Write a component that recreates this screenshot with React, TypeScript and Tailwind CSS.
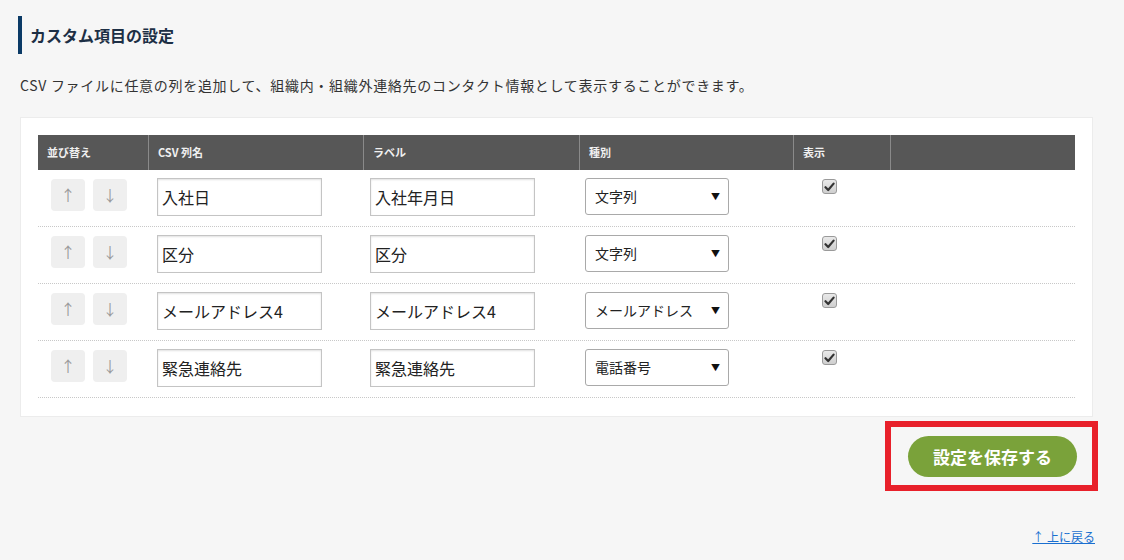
import React from "react";

const rows = [
  { csv: "入社日", label: "入社年月日", type: "文字列" },
  { csv: "区分", label: "区分", type: "文字列" },
  { csv: "メールアドレス4", label: "メールアドレス4", type: "メールアドレス" },
  { csv: "緊急連絡先", label: "緊急連絡先", type: "電話番号" },
];

const font = { fontFamily: '"Noto Sans CJK JP", "Noto Sans", sans-serif' };

function Check() {
  return (
    <span className="flex h-[15px] w-[15px] items-center justify-center rounded-[3px] border border-[#9a9a9a] bg-gradient-to-b from-[#e9e9e9] to-[#cfcfcf]">
      <svg width="11" height="10" viewBox="0 0 11 10">
        <path d="M1.5 5.2 L4.2 8 L9.6 1.6" fill="none" stroke="#333" strokeWidth="2.2" strokeLinecap="round" strokeLinejoin="round" />
      </svg>
    </span>
  );
}

export default function App() {
  return (
    <div className="min-h-[560px] w-[1124px] bg-[#f6f6f6] pt-[16px] text-[#333]" style={font}>
      <div className="ml-[18px] flex h-[38px] items-center border-l-4 border-[#0b3a66] pl-[8px]">
        <h2 className="text-[16px] font-bold text-[#1d2f45]">カスタム項目の設定</h2>
      </div>
      <p className="ml-[20px] mt-[21px] text-[14px] leading-[20px] tracking-[0.7px] text-[#333]">
        CSV ファイルに任意の列を追加して、組織内・組織外連絡先のコンタクト情報として表示することができます。
      </p>
      <div className="ml-[20px] mt-[22px] w-[1073px] border border-[#ececec] bg-white px-[17px] pb-[18px] pt-[17px]">
        <div className="w-[1037px]">
          <div className="flex h-[35px] bg-[#575757] text-[11px] font-bold text-[#f0f0f0]">
            <div className="flex w-[111px] items-center border-r border-[#8a8a8a] pl-[9px]">並び替え</div>
            <div className="flex w-[215px] items-center border-r border-[#8a8a8a] pl-[9px]">CSV 列名</div>
            <div className="flex w-[216px] items-center border-r border-[#8a8a8a] pl-[9px]">ラベル</div>
            <div className="flex w-[214px] items-center border-r border-[#8a8a8a] pl-[9px]">種別</div>
            <div className="flex w-[97px] items-center border-r border-[#8a8a8a] pl-[9px]">表示</div>
            <div className="flex-1" />
          </div>
          {rows.map((r, i) => (
            <div key={i} className="flex h-[57px] border-b border-dotted border-[#c8c8c8]">
              <div className="flex w-[111px] gap-[8px] pl-[13px] pt-[9px]">
                <span className="flex h-[32px] w-[34px] items-center justify-center rounded-[4px] bg-[#efefef] text-[15px] text-[#9a9a9a]">↑</span>
                <span className="flex h-[32px] w-[34px] items-center justify-center rounded-[4px] bg-[#efefef] text-[15px] text-[#9a9a9a]">↓</span>
              </div>
              <div className="w-[215px] pl-[8px] pt-[8px]">
                <div className="flex h-[38px] w-[165px] items-center border border-[#c4c4c4] pl-[4px] text-[16px] text-[#222] shadow-[inset_0_1px_2px_rgba(0,0,0,0.12)]">
                  {r.csv}
                </div>
              </div>
              <div className="w-[216px] pl-[6px] pt-[8px]">
                <div className="flex h-[38px] w-[165px] items-center border border-[#c4c4c4] pl-[4px] text-[16px] text-[#222] shadow-[inset_0_1px_2px_rgba(0,0,0,0.12)]">
                  {r.label}
                </div>
              </div>
              <div className="w-[214px] pl-[5px] pt-[8px]">
                <div className="flex h-[37px] w-[144px] items-center justify-between rounded-[3px] border border-[#a9a9a9] bg-white pl-[9px] pr-[8px] text-[14px] text-[#222]">
                  <span>{r.type}</span>
                  <span className="text-[9px] text-[#111]">▼</span>
                </div>
              </div>
              <div className="w-[97px] pl-[28px] pt-[9px]">
                <Check />
              </div>
              <div className="flex-1" />
            </div>
          ))}
        </div>
      </div>
      <div className="mt-[4px] flex justify-end pr-[26px]">
        <div className="border-[6px] border-[#e8202a] pb-[8px] pl-[17px] pr-[15px] pt-[9px]">
          <button className="flex h-[41px] w-[169px] items-center justify-center rounded-full bg-[#7aa23a] text-[17px] font-bold text-white">
            設定を保存する
          </button>
        </div>
      </div>
      <div className="mt-[38px] flex justify-end pr-[29px]">
        <a className="text-[12px] leading-[16px] text-[#1a6fd0] underline">↑ 上に戻る</a>
      </div>
    </div>
  );
}
